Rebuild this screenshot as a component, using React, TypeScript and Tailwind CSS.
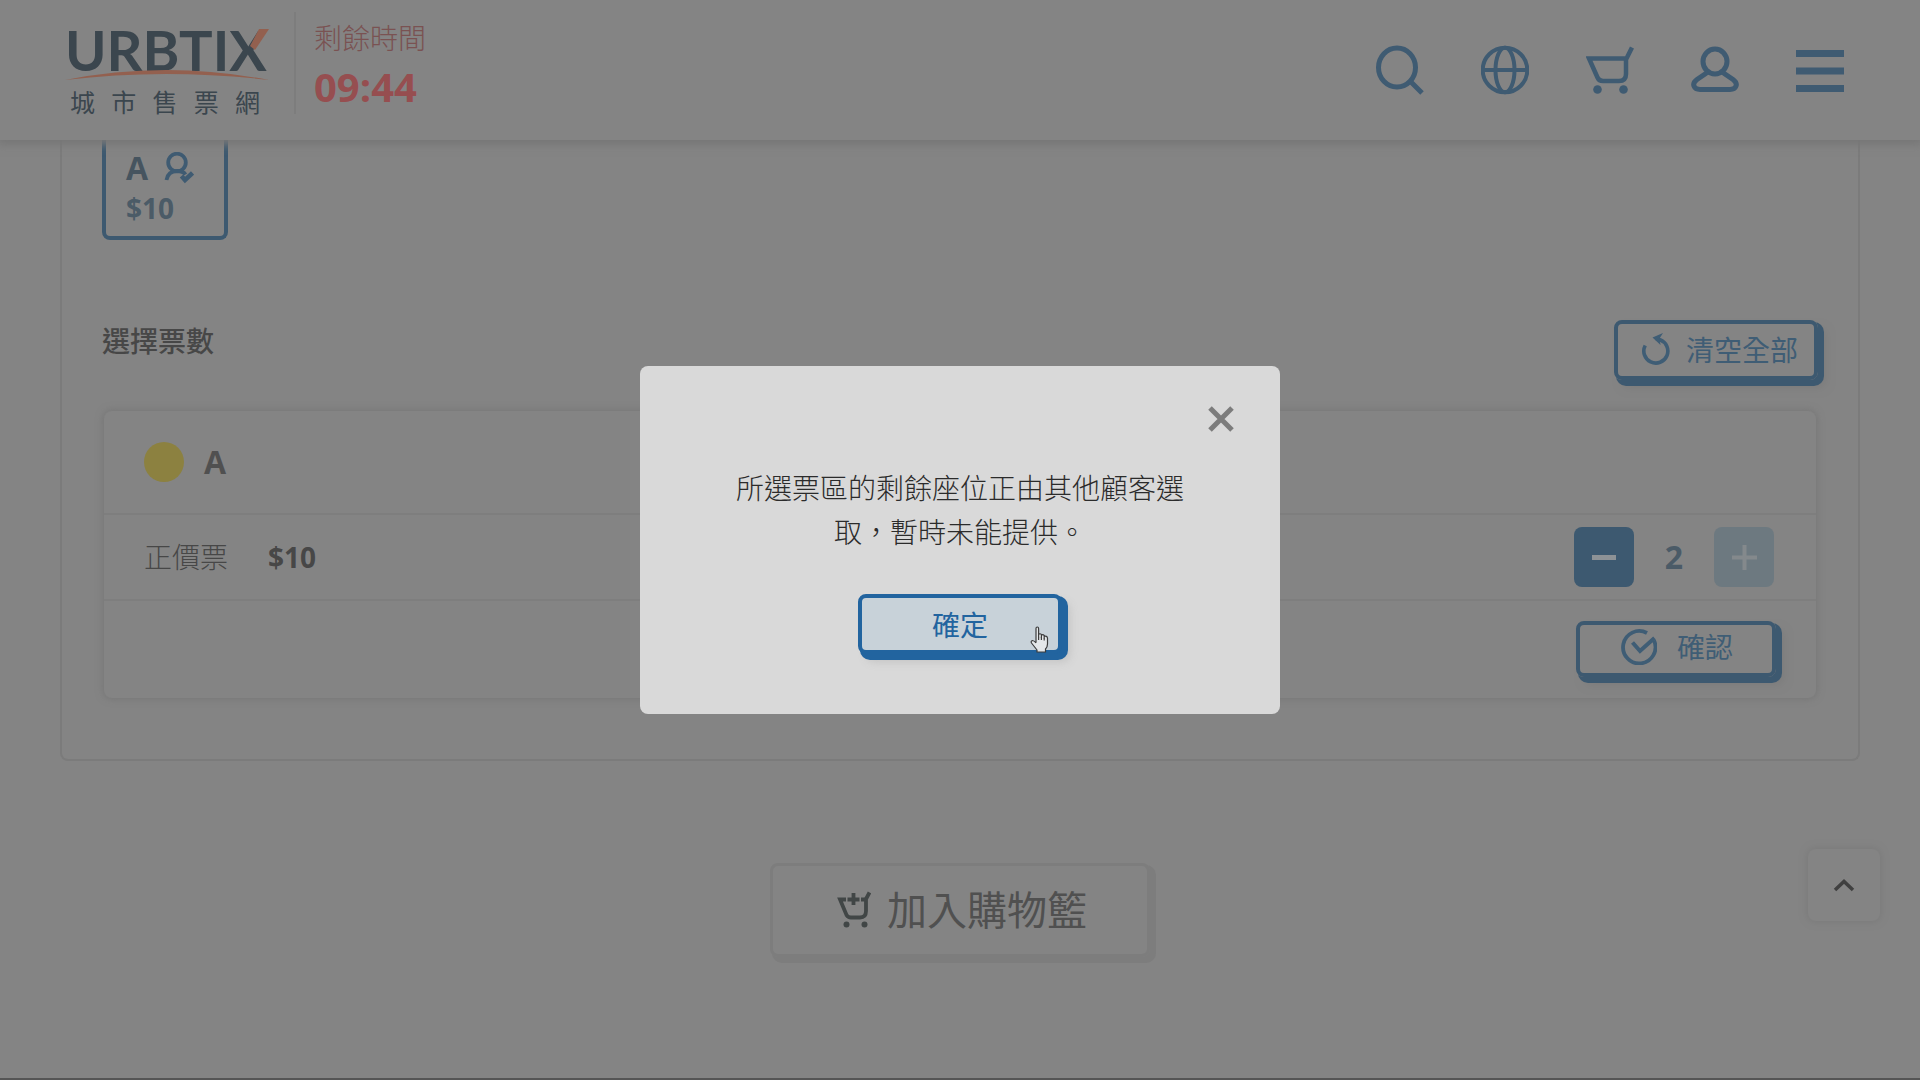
import { useState } from "react";

function SearchIcon() {
  return (
    <svg width="48" height="50" viewBox="0 0 48 50" fill="none" stroke="currentColor" strokeWidth="5" aria-hidden="true">
      <ellipse cx="21" cy="22.500" rx="18.500" ry="19.500" />
      <path d="M34 36 L46 48" />
    </svg>
  );
}

function GlobeIcon() {
  return (
    <svg width="48" height="50" viewBox="0 0 48 50" fill="none" stroke="currentColor" strokeWidth="4" aria-hidden="true">
      <circle cx="24" cy="25" r="22.300" />
      <ellipse cx="24" cy="25" rx="9.500" ry="22.300" />
      <path d="M2 25 H46" />
    </svg>
  );
}

function CartIcon() {
  return (
    <svg width="48" height="50" viewBox="0 0 48 50" fill="none" stroke="currentColor" strokeWidth="4.500" aria-hidden="true">
      <path d="M46 2.500 L40 14.500 V29 Q40 36 33 36 H17 Q13 36 11.500 32.500 L3 13.500 H40" />
      <circle cx="11.500" cy="44.500" r="4.300" fill="currentColor" stroke="none" />
      <circle cx="37.500" cy="44.500" r="4.300" fill="currentColor" stroke="none" />
    </svg>
  );
}

function UserIcon() {
  return (
    <svg width="48" height="50" viewBox="0 0 48 50" fill="none" stroke="currentColor" strokeWidth="5" aria-hidden="true">
      <ellipse cx="24" cy="16.500" rx="12" ry="12.500" />
      <path d="M17 27 L6 34.500 C0 39 3 44.500 9 44.500 H39 C45 44.500 48 39 42 34.500 L31 27" />
    </svg>
  );
}

function MenuIcon() {
  return (
    <svg width="48" height="50" viewBox="0 0 48 50" fill="currentColor" aria-hidden="true">
      <rect y="5" width="48" height="7" />
      <rect y="22.500" width="48" height="7" />
      <rect y="40" width="48" height="7" />
    </svg>
  );
}

function PersonCheckIcon() {
  return (
    <svg width="30" height="32" viewBox="0 0 30 32" fill="none" stroke="currentColor" strokeWidth="3.800" aria-hidden="true">
      <circle cx="13" cy="10.500" r="8.800" />
      <path d="M2.500 28 C3.500 22.500 7 19 13 19 C17 19 20 20 21.500 22.500" />
      <path d="M17.500 24 L21 28 L28.500 21" strokeWidth="4.500" />
    </svg>
  );
}

function ResetIcon() {
  return (
    <svg width="28" height="34" viewBox="0 0 28 34" fill="none" stroke="currentColor" strokeWidth="3.600" aria-hidden="true">
      <path d="M3.200 12.500 A12 12 0 1 0 18 6.800 L14 5.500" />
      <path d="M10.500 4.500 L21 0 L17.500 5.500 L18.500 12 Z" fill="currentColor" stroke="none" />
    </svg>
  );
}

function CheckCircleIcon() {
  return (
    <svg width="36" height="36" viewBox="0 0 36 36" fill="none" stroke="currentColor" strokeWidth="3.800" aria-hidden="true">
      <path d="M26 4 A16.200 16.200 0 1 0 33 11.500" />
      <path d="M11.500 13.500 L19 22 L33.500 9" strokeWidth="4" />
    </svg>
  );
}

function CartPlusIcon() {
  return (
    <svg width="34" height="38" viewBox="0 0 34 38" fill="none" stroke="currentColor" strokeWidth="3.800" aria-hidden="true">
      <path d="M32.500 1.500 L29 8 V20 Q29 26.500 23 26.500 H14 Q11 26.500 9.500 24 L3 8.500 H9" />
      <path d="M24 8.500 H29 M16.500 2 V14 M10.500 8.500 H22.500" />
      <circle cx="9.500" cy="33.500" r="3" fill="currentColor" stroke="none" />
      <circle cx="27.500" cy="33.500" r="3" fill="currentColor" stroke="none" />
    </svg>
  );
}

function HandPointer() {
  return (
    <svg width="19" height="27" viewBox="0 0 19 27" fill="#e4e7e9" stroke="#3c3c3c" strokeWidth="1.200" strokeLinejoin="round" aria-hidden="true">
      <path d="M6 16.500 V2.500 Q6 1 7.300 1 Q8.600 1 8.600 2.500 V11 V8.500 Q10 7 11.400 8.500 V11.500 V9.300 Q12.800 8 14.200 9.500 V12 V10.500 Q17 9.500 17.500 12 V18 Q17.500 21 15.500 23 V26 H7 V24 L1.500 17 Q0.500 15 2.500 14.500 Q4 14.500 6 17" />
      <path d="M11.400 11 V14 M14.200 12 V14.500 M8.600 11 V14" />
    </svg>
  );
}

function Logo() {
  return (
    <a href="#home" className="relative block w-[200px] shrink-0 text-[#3b464e]">
      <span className="mt-[18px] block text-center font-['Lato',sans-serif] text-[56px] leading-[64px] font-bold">URBTIX</span>
      <svg className="absolute top-0 left-0" width="204" height="86" viewBox="0 0 204 86" aria-hidden="true">
        <path d="M0 80 Q100 60 204 80 Q100 68 0 80 Z" fill="#93604f" />
        <path d="M185 46 L194 29 H204 L190 50 Z" fill="#93604f" />
      </svg>
      <span className="mx-auto block w-[190px] text-[25px] leading-[40px] [text-align-last:justify]">城市售票網</span>
    </a>
  );
}

const outline =
  "flex items-center justify-center rounded-lg border-4 border-[#3d5970] text-[28px] font-normal text-[#3f5d75] shadow-[4px_4px_0_2px_#3d5970,8px_8px_8px_0_#7c7c7c]";

export default function App() {
  const [count, setCount] = useState(2);
  const [open, setOpen] = useState(true);

  return (
    <div
      lang="zh-Hant-HK"
      className="flex min-h-screen flex-col border-b-2 border-[#555555] bg-[#848484] font-['Open_Sans','Noto_Sans_CJK_TC',sans-serif] text-[#474747]"
    >
      <header className="relative z-10 flex h-[140px] items-center justify-between bg-[#848484] pr-[76px] pl-[65px] shadow-[0_3px_8px_2px_#777777]">
        <div className="flex h-full items-start">
          <Logo />
          <div className="mt-3 ml-[29px] h-[102px] border-l-2 border-[#7d7d7d] pl-[18px]">
            <div className="pt-[5px] text-[28px] leading-[42px] font-light text-[#7a5252]">剩餘時間</div>
            <div className="pt-1 text-[40px] leading-[48px] font-bold text-[#964e50]">09:44</div>
          </div>
        </div>
        <nav aria-label="主選單" className="flex items-center gap-[57px] text-[#3f5b72]">
          <button type="button" aria-label="搜尋"><SearchIcon /></button>
          <button type="button" aria-label="語言"><GlobeIcon /></button>
          <button type="button" aria-label="購物籃"><CartIcon /></button>
          <button type="button" aria-label="帳戶"><UserIcon /></button>
          <button type="button" aria-label="選單"><MenuIcon /></button>
        </nav>
      </header>

      <main className="flex flex-col">
        <section className="mx-[60px] rounded-b-lg border-2 border-t-0 border-[#7b7b7b] px-10 pb-[61px]">
          <button type="button" className="block h-[100px] w-[126px] rounded-b-lg border-4 border-t-0 border-[#3d5970] pl-5 text-left font-bold">
            <span className="flex items-center gap-4 text-[32px] leading-[40px] text-[#46545f]">
              A
              <span className="text-[#3f5b72]"><PersonCheckIcon /></span>
            </span>
            <span className="block text-[28px] leading-[40px] text-[#4b5b67]">$10</span>
          </button>

          <div className="mt-20 flex items-start justify-between">
            <h2 className="text-[28px] leading-[42px] font-medium">選擇票數</h2>
            <button type="button" className={`${outline} h-[60px] w-[204px] gap-4 pl-2`}>
              <ResetIcon />
              清空全部
            </button>
          </div>

          <div className="mx-[2px] mt-[31px] rounded-lg shadow-[0_0_6px_2px_#797979]">
            <div className="flex h-[102px] items-center gap-5 px-10">
              <span className="size-10 rounded-full bg-[#8c8140]" />
              <span className="text-[32px] font-bold text-[#505050]">A</span>
            </div>
            <div className="flex h-[88px] items-center border-y-2 border-[#7e7e7e] pr-[42px] pl-10">
              <span className="text-[28px] font-light">正價票</span>
              <span className="ml-10 text-[28px] font-bold">$10</span>
              <div className="ml-auto flex items-center">
                <button
                  type="button"
                  aria-label="減少"
                  onClick={() => setCount(Math.max(0, count - 1))}
                  className="flex size-15 items-center justify-center rounded-lg bg-[#3d5970]"
                >
                  <span className="h-[5px] w-6 bg-[#8d9296]" />
                </button>
                <output className="w-20 text-center text-[32px] font-bold text-[#4b5b67]">{count}</output>
                <button
                  type="button"
                  aria-label="增加"
                  disabled
                  className="flex size-15 items-center justify-center rounded-lg bg-[#6d7980]"
                >
                  <svg width="25" height="25" viewBox="0 0 25 25" stroke="#84898c" strokeWidth="4" aria-hidden="true">
                    <path d="M12.500 0 V25 M0 12.500 H25" />
                  </svg>
                </button>
              </div>
            </div>
            <div className="flex h-[97px] items-start justify-end px-10 pt-5">
              <button type="button" className={`${outline} h-[56px] w-[200px] gap-5 pb-1 pl-[2px]`}>
                <CheckCircleIcon />
                確認
              </button>
            </div>
          </div>
        </section>

        <button
          type="button"
          disabled
          className="mt-[102px] flex h-[94px] w-[380px] items-center justify-center gap-4 self-center rounded-lg border-3 border-[#7d7d7d] pl-1 text-[40px] font-normal text-[#505050] shadow-[4px_4px_0_2px_#7d7d7d]"
        >
          <span className="text-[#414646]"><CartPlusIcon /></span>
          加入購物籃
        </button>
      </main>

      <button
        type="button"
        aria-label="返回頁頂"
        className="fixed right-10 bottom-[159px] flex size-[72px] items-center justify-center rounded-lg shadow-[0_0_6px_2px_#7c7c7c]"
      >
        <svg width="22" height="14" viewBox="0 0 22 14" fill="none" stroke="#404040" strokeWidth="3.500" aria-hidden="true">
          <path d="M2 12 L11 3.500 L20 12" />
        </svg>
      </button>

      {open && (
        <div className="fixed inset-0 z-20 flex items-center justify-center">
          <div
            role="dialog"
            aria-modal="true"
            aria-describedby="dialog-message"
            className="flex w-[640px] flex-col items-center rounded-lg bg-[#d9d9d9] pb-[60px]"
          >
            <button type="button" aria-label="關閉" onClick={() => setOpen(false)} className="mt-10 mr-[46px] self-end text-[#7c7c7c]">
              <svg width="26" height="26" viewBox="0 0 26 26" fill="none" stroke="currentColor" strokeWidth="5" aria-hidden="true">
                <path d="M2 2 L24 24 M24 2 L2 24" />
              </svg>
            </button>
            <p id="dialog-message" className="mt-[34px] w-[450px] text-center text-[28px] leading-[44px] font-light text-[#2b2b2b]">
              所選票區的剩餘座位正由其他顧客選取，暫時未能提供。
            </p>
            <button
              type="button"
              onClick={() => setOpen(false)}
              className="relative mt-10 flex h-[60px] w-[204px] items-center justify-center rounded-lg border-4 border-[#22649f] bg-[#c8d2d9] pt-[2px] text-[28px] font-normal text-[#22649f] shadow-[4px_4px_0_2px_#22649f,8px_8px_8px_0_#c4c4c4]"
            >
              確定
              <span className="absolute right-[9px] bottom-[-3px]"><HandPointer /></span>
            </button>
          </div>
        </div>
      )}
    </div>
  );
}
